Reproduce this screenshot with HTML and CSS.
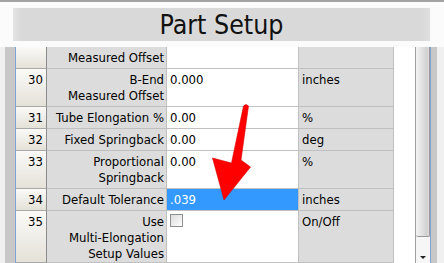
FILE: index.html
```html
<!DOCTYPE html>
<html lang="en">
<head>
    <meta charset="UTF-8">
    <title>Part Setup</title>
    <link rel="stylesheet" href="styles.css">
</head>
<body>
    <div class="title-wrap">
        <h1 class="title">Part Setup</h1>
    </div>

    <div class="panel">
        <div class="gutter-left"></div>

        <div class="grid">
            <div class="rh"></div>
            <div class="label">Measured Offset</div>
            <div class="value"></div>
            <div class="units"></div>

            <div class="rh">30</div>
            <div class="label">B-End<br>Measured Offset</div>
            <div class="value">0.000</div>
            <div class="units">inches</div>

            <div class="rh">31</div>
            <div class="label">Tube Elongation %</div>
            <div class="value">0.00</div>
            <div class="units">%</div>

            <div class="rh">32</div>
            <div class="label">Fixed Springback</div>
            <div class="value">0.00</div>
            <div class="units">deg</div>

            <div class="rh">33</div>
            <div class="label">Proportional<br>Springback</div>
            <div class="value">0.00</div>
            <div class="units">%</div>

            <div class="rh">34</div>
            <div class="label">Default Tolerance</div>
            <div class="value selected">.039</div>
            <div class="units">inches</div>

            <div class="rh">35</div>
            <div class="label">Use<br>Multi-Elongation<br>Setup Values</div>
            <div class="value"><span class="checkbox"></span></div>
            <div class="units">On/Off</div>
        </div>

        <div class="filler"></div>

        <div class="scrollbar">
            <div class="thumb"></div>
            <div class="track"><span class="arrow-down"></span></div>
        </div>

        <div class="gutter-right"></div>
    </div>

    <!-- red callout arrow drawn over the grid -->
    <svg class="pointer" width="444" height="263" viewBox="0 0 444 263">
        <path d="M243.5 104 Q246 101 248.5 104 L241 158 L250.5 165 L224 198 L212.5 156 L231.5 161 Z"
              fill="#ff0000" stroke="#d80000" stroke-width="0.6" stroke-linejoin="round"/>
    </svg>
</body>
</html>
```

FILE: styles.css
```css
* {
    margin: 0;
    padding: 0;
    box-sizing: border-box;
}

body {
    position: relative;
    width: 444px;
    height: 263px;
    overflow: hidden;
    background: #fbfbfb;
    border-top: 2px solid #a3a3a3;
    font-family: "DejaVu Sans Condensed", "Liberation Sans", sans-serif;
    font-size: 13px;
    line-height: 16px;
    color: #000;
}

.title-wrap {
    padding: 6px 14px 6px 13px;
}

.title {
    height: 33px;
    line-height: 33px;
    text-align: center;
    font-size: 26.5px;
    font-weight: normal;
    color: #111;
    background: linear-gradient(to right, #e4e4e4, #d9d9d9 2%, #d9d9d9 98%, #e0e0e0);
}

.panel {
    display: flex;
    height: 216px;
    overflow: hidden;
    background: #fff;
}

.gutter-left {
    width: 16px;
    flex: none;
    background: linear-gradient(to right, #f0f0f0 0 5px, #c8c8c8 5px 15px, #7fa4d4 15px 16px);
}

.gutter-right {
    width: 14px;
    flex: none;
    background: linear-gradient(to right, #7fa4d4 0 1px, #c8c8c8 1px 7px, #f0f0f0 7px);
}

.grid {
    display: grid;
    grid-template-columns: 31px 120px 132px 95px;
    align-content: start;
    flex: none;
}

.grid > div {
    border-right: 1px solid #c0c0c0;
    border-bottom: 1px solid #c0c0c0;
    padding: 3px 3px 2px;
    min-height: 22px;
    white-space: nowrap;
}

.rh {
    text-align: right;
    background: linear-gradient(#fbfaf8, #e4e1d8);
    border-right-color: #8c8c8c !important;
    border-bottom-color: #a8a8a8 !important;
}

.label {
    text-align: right;
    padding-right: 2px !important;
    background: #dcdcdc;
}

.value {
    background: #fff;
}

.value.selected {
    background: #3399ff;
    color: #fff;
}

.units {
    background: #dcdcdc;
}

.checkbox {
    display: block;
    width: 13px;
    height: 13px;
    border: 1px solid #8e8f8f;
    background: linear-gradient(135deg, #dcdcdc, #fdfdfd);
}

.filler {
    width: 21px;
    flex: none;
    background: #fff;
}

.scrollbar {
    width: 15px;
    flex: none;
    display: flex;
    flex-direction: column;
    background: #f6f6f6;
    border-left: 1px solid #a0a0a0;
}

.thumb {
    height: 190px;
    border: 1px solid #9a9a9a;
    border-top: none;
    border-left: none;
    border-radius: 0 0 2px 2px;
    background: linear-gradient(to right, #f3f3f3, #dcdcdc 60%, #cfcfcf 85%, #e2e2e2);
}

.track {
    flex: 1;
    position: relative;
}

.arrow-down {
    position: absolute;
    left: 4px;
    top: 19px;
    width: 0;
    height: 0;
    border-left: 3px solid transparent;
    border-right: 3px solid transparent;
    border-top: 3px solid #222;
}

.pointer {
    position: absolute;
    left: 0;
    top: 0;
    pointer-events: none;
}
```
